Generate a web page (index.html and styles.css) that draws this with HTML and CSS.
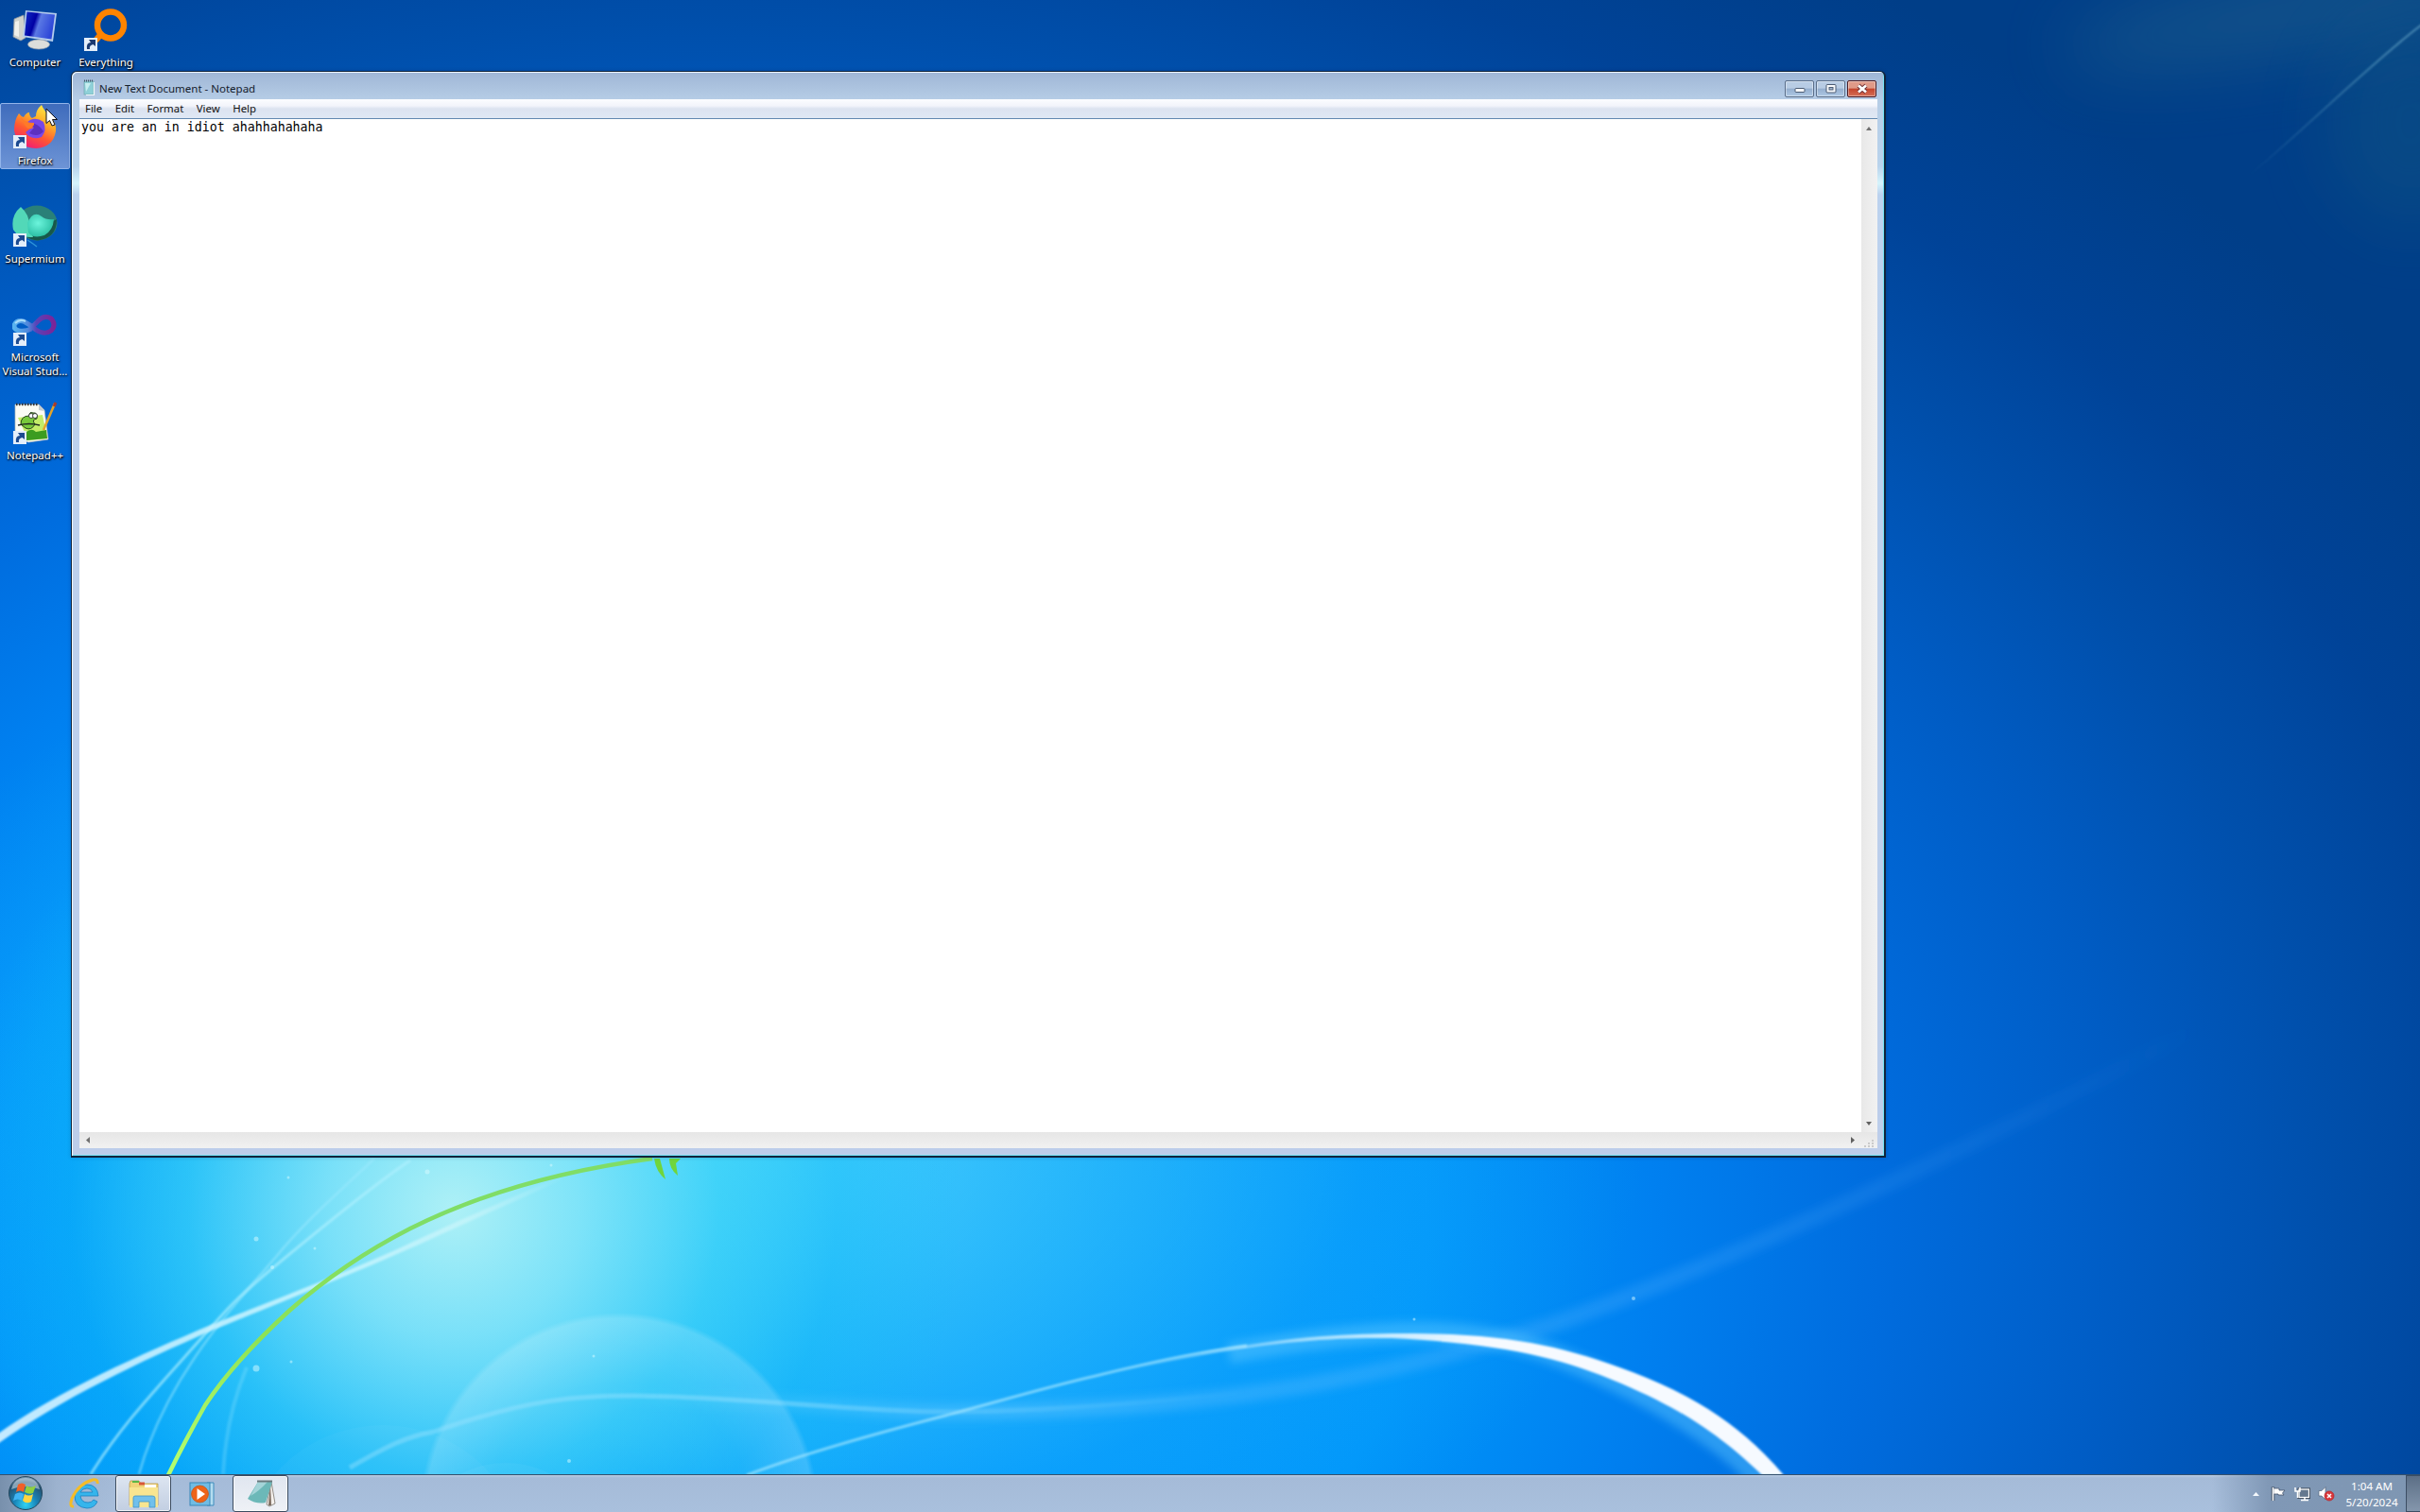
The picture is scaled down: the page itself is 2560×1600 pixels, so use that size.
FILE: index.html
```
<!DOCTYPE html>
<html lang="en">
<head>
  <meta charset="UTF-8">
  <title>Desktop</title>
  <link rel="stylesheet" href="styles.css">
</head>
<body>
<div class="desktop">

  <!-- Wallpaper light streaks -->
  <svg class="wallpaper" viewBox="0 0 2560 1600" width="2560" height="1600">
    <defs>
      <filter id="soft1" x="-10%" y="-10%" width="120%" height="120%"><feGaussianBlur stdDeviation="1.2"/></filter>
      <filter id="soft4" x="-10%" y="-20%" width="120%" height="140%"><feGaussianBlur stdDeviation="5"/></filter>
      <filter id="soft30" x="-60%" y="-100%" width="220%" height="300%"><feGaussianBlur stdDeviation="36"/></filter>
      <radialGradient id="bubble" gradientUnits="userSpaceOnUse" cx="655" cy="1600" r="211">
        <stop offset="0" stop-color="#fff" stop-opacity="0"/>
        <stop offset="0.65" stop-color="#fff" stop-opacity="0.05"/>
        <stop offset="0.97" stop-color="#fff" stop-opacity="0.17"/>
        <stop offset="1" stop-color="#fff" stop-opacity="0"/>
      </radialGradient>
      <linearGradient id="leftStreak" gradientUnits="userSpaceOnUse" x1="0" y1="1523" x2="600" y2="1243">
        <stop offset="0" stop-color="#c4eaff"/>
        <stop offset="0.6" stop-color="#d0f8ff" stop-opacity="0.8"/>
        <stop offset="1" stop-color="#fff" stop-opacity="0"/>
      </linearGradient>
      <linearGradient id="stem" gradientUnits="userSpaceOnUse" x1="178" y1="1560" x2="400" y2="1300">
        <stop offset="0" stop-color="#b6ff70"/>
        <stop offset="0.5" stop-color="#8fe254"/>
        <stop offset="1" stop-color="#80dd66"/>
      </linearGradient>
      <linearGradient id="ray" gradientUnits="userSpaceOnUse" x1="2380" y1="185" x2="2560" y2="28">
        <stop offset="0" stop-color="#5a9ac0" stop-opacity="0"/>
        <stop offset="1" stop-color="#5b9bc0" stop-opacity="0.8"/>
      </linearGradient>
      <linearGradient id="mist" gradientUnits="userSpaceOnUse" x1="640" y1="0" x2="2330" y2="0">
        <stop offset="0" stop-color="#9be6ff" stop-opacity="0"/>
        <stop offset="0.25" stop-color="#7ad0ff" stop-opacity="0.32"/>
        <stop offset="0.6" stop-color="#5ab4ff" stop-opacity="0.28"/>
        <stop offset="0.8" stop-color="#5ab4ff" stop-opacity="0.14"/>
        <stop offset="1" stop-color="#4aa0ff" stop-opacity="0"/>
      </linearGradient>
      <linearGradient id="thinMist" gradientUnits="userSpaceOnUse" x1="370" y1="0" x2="1319" y2="0">
        <stop offset="0" stop-color="#a0e4ff" stop-opacity="0.4"/>
        <stop offset="0.5" stop-color="#a0e4ff" stop-opacity="0.4"/>
        <stop offset="1" stop-color="#a0e4ff" stop-opacity="0"/>
      </linearGradient>
      <linearGradient id="arc" gradientUnits="userSpaceOnUse" x1="1180" y1="0" x2="1560" y2="0">
        <stop offset="0" stop-color="#c8efff" stop-opacity="0"/>
        <stop offset="0.6" stop-color="#d4f2ff" stop-opacity="0.75"/>
        <stop offset="1" stop-color="#f6faff"/>
      </linearGradient>
    </defs>

    <circle cx="655" cy="1600" r="211" fill="url(#bubble)"/>
    <circle cx="405" cy="1660" r="152" fill="#fff" opacity="0.03"/>
    <circle cx="535" cy="1652" r="104" fill="#fff" opacity="0.04"/>

    <path d="M370 1553 C410 1530 430 1520 459 1515 C560 1480 610 1477 670 1477 C790 1478 900 1494 1000 1494 C1100 1494 1220 1484 1319 1473" fill="none" stroke="url(#thinMist)" stroke-width="5" filter="url(#soft1)"/>
    <path d="M640 1477 C850 1482 920 1494 1000 1494 C1320 1494 1480 1450 1638 1403 C1800 1347 2060 1230 2330 1085" fill="none" stroke="url(#mist)" stroke-width="17" filter="url(#soft4)"/>

    <!-- Left side streaks -->
    <path d="M434 1228 C400 1250 345 1295 287 1343 C255 1370 245 1380 230 1397 C170 1465 130 1505 96 1560" fill="none" stroke="#b0f1ff" stroke-opacity="0.65" stroke-width="3" filter="url(#soft1)"/>
    <path d="M396 1226 C360 1260 320 1295 292 1330 C240 1390 175 1460 147 1560" fill="none" stroke="#a0ecff" stroke-opacity="0.5" stroke-width="2.5" filter="url(#soft1)"/>
    <path d="M261 1447 C245 1485 238 1520 236 1560" fill="none" stroke="#a0ecff" stroke-opacity="0.25" stroke-width="4" filter="url(#soft1)"/>
    <path d="M-6 1520 C60 1472 150 1433 223 1402 C300 1372 390 1337 450 1308 C510 1280 560 1260 610 1236 L612 1240 C560 1265 510 1286 452 1313 C390 1341 300 1377 224 1408 C150 1440 65 1480 -4 1529 Z" fill="url(#leftStreak)" filter="url(#soft1)"/>
    <path d="M178 1561 C192 1532 204 1510 217 1487 C240 1452 270 1420 306 1387 C340 1357 385 1325 434 1300 C510 1262 600 1238 690 1226" fill="none" stroke="url(#stem)" stroke-width="4.5"/>
    <path d="M692 1226 L698 1226 L704 1248 Q694 1240 692 1226 Z M708 1226 L720 1226 L715 1231 L717 1244 Q708 1237 708 1226 Z" fill="#70d53c"/>

    <!-- Big white arc -->
    <path d="M1300 1432 C1472 1400 1570 1404 1650 1436 C1760 1480 1830 1530 1866 1570" fill="none" stroke="#60c8ff" stroke-opacity="0.45" stroke-width="22" filter="url(#soft4)"/>
    <path d="M790 1561 C850 1538 930 1516 1000 1498 C1060 1482 1110 1467 1159 1456 C1220 1441 1270 1430 1319 1424" fill="none" stroke="#a8e8ff" stroke-opacity="0.65" stroke-width="3" filter="url(#soft1)"/>
    <path d="M1180 1451 C1330 1416 1400 1412 1472 1411 C1590 1410 1650 1423 1727 1452 C1792 1477 1842 1508 1887 1561 L1864 1561 C1815 1514 1775 1490 1715 1464 C1650 1436 1590 1422 1472 1416 C1400 1415 1330 1420 1180 1453 Z" fill="url(#arc)" filter="url(#soft1)"/>

    <!-- Haze in the top right corner -->
    <ellipse cx="2440" cy="10" rx="260" ry="45" fill="#2a6c8c" opacity="0.42" filter="url(#soft30)" transform="rotate(-10 2440 10)"/>
    <ellipse cx="2550" cy="130" rx="90" ry="110" fill="#1f6580" opacity="0.28" filter="url(#soft30)"/>
    <path d="M2380 185 C2440 135 2510 65 2562 26" fill="none" stroke="url(#ray)" stroke-width="2" filter="url(#soft1)"/>

    <g fill="#d8fbff" opacity="0.5">
      <circle cx="452" cy="1240" r="2.5"/>
      <circle cx="271" cy="1311" r="2.5"/>
      <circle cx="333" cy="1321" r="1.5"/>
      <circle cx="305" cy="1246" r="1.5"/>
      <circle cx="288" cy="1341" r="2"/>
      <circle cx="271" cy="1448" r="3.5"/>
      <circle cx="308" cy="1441" r="1.5"/>
      <circle cx="628" cy="1435" r="1.5"/>
      <circle cx="602" cy="1546" r="2"/>
      <circle cx="1496" cy="1396" r="1.5"/>
      <circle cx="1728" cy="1374" r="2"/>
      <circle cx="583" cy="1233" r="1.5"/>
    </g>
  </svg>

  <!-- Desktop icons, one list per column -->
  <div class="icon-columns">
    <div class="icon-column">
      <div class="icon">
        <svg width="48" height="48" viewBox="0 0 48 48">
          <defs>
            <linearGradient id="screen" x1="0" y1="0" x2="1" y2="0.3">
              <stop offset="0" stop-color="#1430c8"/><stop offset="0.4" stop-color="#0000a4"/><stop offset="0.55" stop-color="#5a78e4"/><stop offset="1" stop-color="#2e48d8"/>
            </linearGradient>
          </defs>
          <path d="M2 14 L12 10 L14 34 L9 37 L1 33 Z" fill="#d0d2cc" stroke="#8c94a0" stroke-width="0.8"/>
          <path d="M3 17 L7 16 L7 33 L2 31 Z" fill="#f0f0ea"/>
          <path d="M14 5 L47 8 L43 38 L11 33 Z" fill="#b4ccec"/>
          <path d="M15.500 6.500 L45 9.500 L41.500 35.500 L13 31.500 Z" fill="url(#screen)"/>
          <path d="M26 36 L33 37 L33 41 L26 40 Z" fill="#c8ccd0"/>
          <ellipse cx="28" cy="41" rx="11.500" ry="5" fill="#dcdedb" stroke="#a4aab0" stroke-width="0.7"/>
        </svg>
        <span class="icon-label">Computer</span>
      </div>

      <div class="icon selected">
        <svg width="48" height="48" viewBox="0 0 48 48">
          <defs>
            <linearGradient id="fox" x1="0.8" y1="0" x2="0.3" y2="1">
              <stop offset="0" stop-color="#fff04a"/><stop offset="0.35" stop-color="#ffb028"/><stop offset="0.65" stop-color="#ff5a30"/><stop offset="1" stop-color="#f01878"/>
            </linearGradient>
          </defs>
          <path d="M7 10 Q9 13 12 14 Q15 9 18 9 Q18 13 21 15 L25 13 Q25 6 31 1 Q34 8 40 13 Q47 20 46 29 Q43 46 25 47 Q5 46 2 28 Q2 17 7 10 Z" fill="url(#fox)"/>
          <path d="M15 20 Q23 12 33 19 Q37 28 31 35 Q20 39 14 30 Q18 26 23 25 L15 22 Z" fill="#7848e8"/>
          <path d="M15 21 Q26 18 33 29 Q27 36 18 31 L23 25 Z" fill="#5c30c0"/>
          <path d="M9 14 Q13 20 23 20 Q24 24 17 26 Q13 24 9 14 Z" fill="#ff7a28"/>
          <g class="shortcut"><rect x="1" y="33" width="14" height="14" fill="#e4eefa"/><path d="M4 45 Q3 38 8 38 L6 35 H13 V42 L10.500 40 Q6 41 7 45 Z" fill="#1c4a90"/></g>
        </svg>
        <span class="icon-label">Firefox</span>
      </div>

      <div class="icon">
        <svg width="48" height="48" viewBox="0 0 48 48">
          <defs>
            <radialGradient id="gem" cx="0.4" cy="0.4" r="0.7">
              <stop offset="0" stop-color="#6cf4dc"/><stop offset="1" stop-color="#22b89c"/>
            </radialGradient>
          </defs>
          <ellipse cx="26" cy="22" rx="21.500" ry="18.500" fill="#2a8078"/>
          <path d="M47 18 Q47 38 27 40.500 Q20 40 14 36 Z" fill="#17584a"/>
          <path d="M9 5 Q18 13 18 24 L22 37 Q6 38 1 29 Q-2 14 9 5 Z" fill="#52d8b8"/>
          <path d="M16 22 Q22 8 31 15 Q36 19 44 18 Q43 30 34 35 Q22 39 17 32 Z" fill="url(#gem)"/>
          <path d="M16 40 L22 44 L26 47" fill="none" stroke="#2c94d8" stroke-width="1.5"/>
          <g class="shortcut"><rect x="1" y="33" width="14" height="14" fill="#e4eefa"/><path d="M4 45 Q3 38 8 38 L6 35 H13 V42 L10.500 40 Q6 41 7 45 Z" fill="#1c4a90"/></g>
        </svg>
        <span class="icon-label">Supermium</span>
      </div>

      <div class="icon">
        <svg width="48" height="48" viewBox="0 0 48 48">
          <defs>
            <linearGradient id="loop" x1="0" y1="0" x2="1" y2="0">
              <stop offset="0" stop-color="#58b4f0"/><stop offset="0.35" stop-color="#5088dc"/><stop offset="0.55" stop-color="#5844b8"/><stop offset="1" stop-color="#7c2498"/>
            </linearGradient>
          </defs>
          <path d="M20 30 Q14 33 7 32 Q1 30 2 26 Q5 20 12 22 Q18 25 25 31 Q34 37 41 32 Q47 26 41 19 Q34 15 28 21 Q23 26 18 31" fill="none" stroke="url(#loop)" stroke-width="5"/>
          <path d="M3 24 Q8 19 14 22" fill="none" stroke="#a8dcf8" stroke-width="2"/>
          <g class="shortcut"><rect x="1" y="34" width="14" height="14" fill="#e4eefa"/><path d="M4 46 Q3 39 8 39 L6 36 H13 V43 L10.500 41 Q6 42 7 46 Z" fill="#1c4a90"/></g>
        </svg>
        <span class="icon-label">Microsoft<br>Visual Stud...</span>
      </div>

      <div class="icon">
        <svg width="48" height="48" viewBox="0 0 48 48">
          <path d="M3 6 H28 L34 12 L38 43 L17 46 L3 40 Z" fill="#fbfbf4" stroke="#b8bcb8" stroke-width="0.7"/>
          <path d="M4 6 H28" stroke="#333" stroke-width="2.500" stroke-dasharray="1.500 1.500"/>
          <path d="M28 6 L28 12 L34 13 Z" fill="#c4ccd0"/>
          <path d="M6 20 L32 17 L37 42 L17 44 Z" fill="#c4ec68"/>
          <path d="M14 36 Q20 30 25 35 L36 33 L37 42 L15 44 Z" fill="#3c9c20"/>
          <path d="M9 27 Q9 18 18 18 Q18 13 22 15 Q27 14 26 21 Q20 22 24 27 Q20 34 14 31 Z" fill="#78c83c" stroke="#26451c"/>
          <circle cx="20" cy="18" r="2.500" fill="#fff" stroke="#222" stroke-width="0.8"/>
          <circle cx="24" cy="18" r="2.500" fill="#fff" stroke="#222" stroke-width="0.8"/>
          <path d="M6 28 Q18 25 29 28" fill="none" stroke="#202820" stroke-width="1.500"/>
          <path d="M45 5 L33 33" stroke="#e4a428" stroke-width="2.500"/>
          <path d="M46 4 L44 8" stroke="#a83c2c" stroke-width="3"/>
          <g class="shortcut"><rect x="1" y="34" width="14" height="14" fill="#e4eefa"/><path d="M4 46 Q3 39 8 39 L6 36 H13 V43 L10.500 41 Q6 42 7 46 Z" fill="#1c4a90"/></g>
        </svg>
        <span class="icon-label">Notepad++</span>
      </div>
    </div>

    <div class="icon-column">
      <div class="icon">
        <svg width="48" height="48" viewBox="0 0 48 48">
          <circle cx="29" cy="20.500" r="14" fill="none" stroke="#ff8400" stroke-width="6.500"/>
          <path d="M13 37 L19 30" stroke="#ff8400" stroke-width="6.500"/>
          <g class="shortcut"><rect x="1" y="34" width="14" height="14" fill="#e4eefa"/><path d="M4 46 Q3 39 8 39 L6 36 H13 V43 L10.500 41 Q6 42 7 46 Z" fill="#1c3a70"/></g>
        </svg>
        <span class="icon-label">Everything</span>
      </div>
    </div>
  </div>

  <!-- Notepad window -->
  <div class="window">
    <div class="title-bar">
      <svg class="title-icon" width="13" height="17" viewBox="0 0 13 17">
        <rect x="1" y="2" width="10" height="14" fill="#8ed0d8" stroke="#6ca0a8" stroke-width="0.6"/>
        <path d="M2 4 L8 4 L3 13 Z" fill="#c8eef0"/>
        <path d="M11.500 3 V16.500 H3" fill="none" stroke="#f4f8fa" stroke-width="1.200"/>
        <path d="M1 1.500 H10" stroke="#445868" stroke-width="2" stroke-dasharray="1 1"/>
      </svg>
      <span class="title">New Text Document - Notepad</span>
      <div class="window-buttons">
        <span class="window-button"><svg width="14" height="12"><rect x="2" y="5.500" width="10" height="4" rx="1" fill="#f8fafc" stroke="#4c5c74"/></svg></span>
        <span class="window-button"><svg width="14" height="12"><rect x="2" y="1.500" width="10" height="8.500" rx="1" fill="#f8fafc" stroke="#4c5c74"/><rect x="5" y="4.500" width="4" height="2.500" fill="#a4b8d0" stroke="#4c5c74"/></svg></span>
        <span class="window-button close"><svg width="14" height="12"><path d="M3 2.500 L11 9.500 M11 2.500 L3 9.500" stroke="#6c2c30" stroke-width="4.500"/><path d="M3 2.500 L11 9.500 M11 2.500 L3 9.500" stroke="#fff" stroke-width="2.800"/></svg></span>
      </div>
    </div>
    <div class="client">
      <div class="menu-bar">
        <span>File</span>
        <span>Edit</span>
        <span>Format</span>
        <span>View</span>
        <span>Help</span>
      </div>
      <div class="editor">
        <div class="text">you are an in idiot ahahhahahaha</div>
        <div class="scroll-v">
          <svg width="6" height="4"><path d="M0 4 L3 0 L6 4 Z" fill="#707070"/></svg>
          <svg width="6" height="4"><path d="M0 0 L6 0 L3 4 Z" fill="#606060"/></svg>
        </div>
      </div>
      <div class="scroll-h">
        <svg width="4" height="7"><path d="M4 0 V7 L0 3.500 Z" fill="#707070"/></svg>
        <svg class="scroll-right" width="4" height="7"><path d="M0 0 L4 3.500 L0 7 Z" fill="#606060"/></svg>
        <svg width="17" height="17"><path d="M12 8v2M8 11v2M12 11v2M4 14v2M8 14v2M12 14v2" stroke="#cacaca" stroke-width="2"/></svg>
      </div>
    </div>
  </div>

  <!-- Taskbar -->
  <div class="taskbar">
    <div class="start">
      <svg width="38" height="38" viewBox="0 0 38 38">
        <defs>
          <radialGradient id="orb" cx="0.5" cy="0.85" r="0.85">
            <stop offset="0" stop-color="#30d4f4"/><stop offset="0.4" stop-color="#1884b8"/><stop offset="0.8" stop-color="#255170"/><stop offset="1" stop-color="#87a4bc"/>
          </radialGradient>
        </defs>
        <circle cx="19" cy="19" r="17.500" fill="url(#orb)" stroke="#24485e"/>
        <path d="M4 15 Q7 3 19 3 Q31 3 34 15 Q18 9 4 15 Z" fill="#d8e6f0" opacity="0.55"/>
        <path d="M11 10 Q15 7 19 10 L17 18 Q13 15 9 18 Z" fill="#f06028"/>
        <path d="M20 11 Q24 14 30 11 L27 19 Q23 21 18 18 Z" fill="#90d040"/>
        <path d="M8 20 Q13 17 17 20 L15 27 Q11 24 6 27 Z" fill="#40b4f4"/>
        <path d="M18 20 Q22 23 27 20 L25 28 Q20 31 16 27 Z" fill="#ffd440"/>
      </svg>
    </div>
    <div class="task">
      <svg width="34" height="34" viewBox="0 0 34 34">
        <path d="M31 19 H12 Q13 26 20 26 Q24 26 26 23 L30 25 Q27 32 19 32 Q6 31 6 19 Q7 7 19 7 Q30 7 31 19 Z M12 15 H25 Q24 11 19 11 Q14 11 12 15 Z" fill="#35b5ec" fill-rule="evenodd" stroke="#1b80c0" stroke-width="0.8"/>
        <path d="M30 6 Q31 1 25 2 Q10 6 3 22 Q0 31 5 30" fill="none" stroke="#f4bc28" stroke-width="3"/>
      </svg>
    </div>
    <div class="task open">
      <svg width="34" height="34" viewBox="0 0 34 34">
        <path d="M2 6 L3 3 H12 L14 6 H32 V29 H2 Z" fill="#f0d478" stroke="#b8943c" stroke-width="0.7"/>
        <rect x="5" y="3" width="7" height="2" fill="#58b848"/>
        <rect x="12" y="4.500" width="6" height="3" fill="#d85838"/>
        <rect x="18" y="7" width="12" height="3" fill="#fff"/>
        <path d="M2 10 H32 V31 H2 Z" fill="#f8e590"/>
        <path d="M6 31 V21 Q6 19 8 19 H26 Q29 19 29 21 V31 H23 V25 H12 V31 Z" fill="#70c0ec" stroke="#3c94c8" stroke-width="0.800"/>
      </svg>
    </div>
    <div class="task">
      <svg width="34" height="34" viewBox="0 0 34 34">
        <path d="M22 5 L29 5 V29 L22 29 Z" fill="#b4dcf0" stroke="#3c8cbc"/>
        <rect x="4" y="5" width="21" height="24" fill="#70bce4" stroke="#3888b8"/>
        <circle cx="14.500" cy="17" r="9" fill="#ee6418" stroke="#c44c10" stroke-width="0.7"/>
        <path d="M11.500 11 L20 17 L11.500 23 Z" fill="#fff"/>
      </svg>
    </div>
    <div class="task open notepad">
      <svg width="34" height="34" viewBox="0 0 34 34">
        <path d="M28 4 L32 27 L26 30 L23 28 Z" fill="#f4f0ec" stroke="#78746c" stroke-width="0.8"/>
        <path d="M27 6 L25 29 L28 29 Z" fill="#7c6c60"/>
        <path d="M14 4 H29 L22 26 Q12 28 3 22 Z" fill="#6cb8b8"/>
        <path d="M14 4 H24 Q15 14 6 19 Z" fill="#a4d4d8"/>
        <path d="M13 3.500 H29" stroke="#68787c" stroke-width="2"/>
      </svg>
    </div>
    <div class="tray">
      <svg width="7" height="4"><path d="M0 4 L3.500 0 L7 4 Z" fill="#f4f8fc"/></svg>
      <svg class="tray-icon" width="17" height="17" viewBox="0 0 17 17">
        <path d="M2.500 1.500 V16" stroke="#3c4c60" stroke-width="3.500"/>
        <path d="M3 3 H9 V5 H15 L12.500 8 L14 10 H8 V9 H3 Z" fill="#fff" stroke="#44546c" stroke-width="0.8"/>
        <path d="M2.500 2 V16" stroke="#fff" stroke-width="1.600"/>
      </svg>
      <svg class="tray-icon" width="17" height="17" viewBox="0 0 17 17">
        <rect x="5" y="4" width="10.500" height="8.500" fill="#5c7088" stroke="#303c4c" stroke-width="3"/>
        <rect x="5" y="4" width="10.500" height="8.500" fill="#64788e" stroke="#fff" stroke-width="1.300"/>
        <path d="M7 15.500 H15 M11 13 V15" stroke="#fff" stroke-width="1.500"/>
        <path d="M1 2 V6 H6 V2 M3.500 6 V13" fill="none" stroke="#fff" stroke-width="1.500"/>
      </svg>
      <svg class="tray-icon" width="18" height="17" viewBox="0 0 18 17">
        <path d="M1 5.500 H4 L8 1.500 V15 L4 11 H1 Z" fill="#fff" stroke="#54647c" stroke-width="0.7"/>
        <circle cx="12" cy="11" r="5" fill="#d8383c" stroke="#b82428" stroke-width="0.7"/>
        <path d="M10 9 L14 13 M14 9 L10 13" stroke="#fff" stroke-width="1.500"/>
      </svg>
      <div class="clock">
        <span>1:04 AM</span>
        <span>5/20/2024</span>
      </div>
      <div class="show-desktop"></div>
    </div>
  </div>

  <!-- Mouse pointer -->
  <svg class="pointer" width="14" height="21" viewBox="0 0 14 21">
    <path d="M1 1 V16.500 L4.500 13.500 L7 19 L10 18 L7.500 12.500 H12.500 Z" fill="#fff" stroke="#101018"/>
  </svg>
</div>
</body>
</html>
```

FILE: styles.css
```
body {
  margin: 0;
  font-family: "Noto Sans", "Open Sans", sans-serif;
  font-size: 12px;
}

svg {
  display: block;
  flex: none;
}

.desktop {
  position: relative;
  display: flex;
  flex-direction: column;
  width: 2560px;
  height: 1600px;
  overflow: hidden;
  background:
    radial-gradient(ellipse 540px 540px at 480px 1280px, rgba(180, 243, 246, 0.95) 0%, rgba(140, 234, 248, 0.82) 25%, rgba(60, 214, 246, 0.6) 52%, rgba(10, 190, 246, 0.32) 75%, rgba(0, 170, 250, 0) 100%),
    radial-gradient(ellipse 980px 600px at 760px 1200px, rgba(90, 220, 253, 0.85) 0%, rgba(60, 200, 250, 0.6) 40%, rgba(30, 175, 252, 0.28) 70%, rgba(10, 155, 255, 0) 100%),
    radial-gradient(ellipse 2000px 1480px at 750px 1300px, #0aa0ff 0%, #0096fa 38%, #0080f0 50%, #006cde 62%, #005cc4 75%, #004fab 86%, #004398 96%, #003e88 108%);
}

.wallpaper {
  position: absolute;
  left: 0;
  top: 0;
}

/* Desktop icons */
.icon-columns {
  flex: 1;
  display: flex;
  gap: 1px;
  padding-top: 5px;
}

.icon-column {
  display: flex;
  flex-direction: column;
  width: 74px;
}

.icon {
  position: relative;
  box-sizing: border-box;
  display: flex;
  flex-direction: column;
  align-items: center;
  height: 70px;
  margin-bottom: 34px;
  border: 1px solid transparent;
}

.icon.selected {
  border: 1px solid #92b4ea;
  border-radius: 2px;
  background: linear-gradient(#3f6cbc, #6d94d6);
}

.icon-label {
  margin-top: 4px;
  color: #fff;
  font-size: 11.5px;
  line-height: 15px;
  text-align: center;
  white-space: nowrap;
  text-shadow: 1px 1px 2px #000, 0 1px 2px #000;
}

/* Notepad window */
.window {
  position: absolute;
  left: 75px;
  top: 75px;
  box-sizing: border-box;
  display: flex;
  flex-direction: column;
  width: 1920px;
  height: 1150px;
  padding: 0 7px 8px 8px;
  border: 1px solid #10243c;
  border-width: 1px 2px 2px 1px;
  border-radius: 6px 6px 0 0;
  background: linear-gradient(#9fb6d6 0, #b6cde6 30px, #b9d3ec 100px, #d6f4fc 118px, #bcd2ee 130px, #bccdea 100%);
  box-shadow: inset 1px 1px 0 #eef6fc, inset -1px -1px 0 #74e2f4, 0 0 4px rgba(0, 10, 40, 0.2);
}

.title-bar {
  display: flex;
  align-items: center;
  height: 29px;
  padding-left: 4px;
}

.title-icon {
  margin-top: 4px;
}

.title {
  margin: 6px 0 0 4px;
  color: #14202c;
  font-size: 11.5px;
}

.window-buttons {
  display: flex;
  gap: 2px;
  margin: 7px 1px 0 auto;
}

.window-button {
  box-sizing: border-box;
  display: flex;
  justify-content: center;
  align-items: center;
  width: 31px;
  height: 18px;
  border: 1px solid #5a6e8a;
  border-radius: 2px;
  background: linear-gradient(#b8cce4 45%, #94aece 50%, #aec8e4);
  box-shadow: inset 0 0 0 1px rgba(255, 255, 255, 0.4);
}

.window-button.close {
  border-color: #4c1c24;
  background: linear-gradient(#e09a88 45%, #c4442c 50%, #d47058);
}

.client {
  flex: 1;
  display: flex;
  flex-direction: column;
  background: #fff;
}

.menu-bar {
  box-sizing: border-box;
  display: flex;
  gap: 13.5px;
  height: 21px;
  padding-left: 6px;
  border-bottom: 1px solid #6288b0;
  background: linear-gradient(#fcfdff 0, #f2f4fb 35%, #dce3f0 50%, #dfe8f4 100%);
  color: #101010;
  font-size: 11.4px;
  line-height: 20px;
}

.editor {
  flex: 1;
  display: flex;
}

.text {
  flex: 1;
  padding: 0 2px;
  color: #000;
  font-family: "DejaVu Sans Mono", monospace;
  font-size: 13.28px;
  line-height: 17px;
}

.scroll-v {
  box-sizing: border-box;
  display: flex;
  flex-direction: column;
  justify-content: space-between;
  align-items: center;
  width: 17px;
  padding: 8px 2px 7px 0;
  background: linear-gradient(90deg, #e8e8e8, #f2f2f2);
}

.scroll-h {
  display: flex;
  align-items: center;
  height: 17px;
  padding-left: 7px;
  background: linear-gradient(#e6e6e6, #f1f1f1);
}

.scroll-right {
  margin: 0 7px 0 auto;
}

/* Taskbar */
.taskbar {
  position: relative;
  box-sizing: border-box;
  display: flex;
  height: 40px;
  border-top: 1px solid #34506c;
  background:
    linear-gradient(90deg, #7890ac 0, rgba(150, 172, 200, 0.6) 60px, rgba(168, 190, 218, 0) 130px),
    linear-gradient(90deg, rgba(128, 152, 182, 0) 2340px, #8098b6 2400px, #7e96b2 100%),
    linear-gradient(#b8cbe2 0, #a5bbd8 3px, #a9c0dd 100%);
}

.start {
  box-sizing: border-box;
  width: 60px;
  padding-left: 8px;
}

.task {
  box-sizing: border-box;
  display: flex;
  justify-content: center;
  align-items: center;
  width: 60px;
  height: 39px;
  margin-right: 2px;
  border: 1px solid transparent;
}

.task.open {
  width: 59px;
  margin-right: 3px;
  border-color: #3c4c60;
  border-radius: 3px;
  background: linear-gradient(#dde5f1, #c2cfe2);
  box-shadow: inset 0 0 0 1px rgba(255, 255, 255, 0.7);
}

.task.notepad {
  background: linear-gradient(#e0e6f0, #eef1f6);
}

.tray {
  display: flex;
  align-items: center;
  margin-left: auto;
}

.tray-icon {
  margin-left: 8px;
}

.tray svg:first-child {
  margin-right: 4px;
}

.clock {
  display: flex;
  flex-direction: column;
  width: 58px;
  margin: 0 7px 0 10px;
  color: #fff;
  font-size: 11.6px;
  line-height: 17px;
  text-align: center;
  white-space: nowrap;
}

.show-desktop {
  box-sizing: border-box;
  width: 15px;
  height: 39px;
  border: 1px solid #3c4e64;
  border-right: 0;
  background: linear-gradient(#5c6f86, #8496ac);
}

.pointer {
  position: absolute;
  left: 48px;
  top: 114px;
}
```
